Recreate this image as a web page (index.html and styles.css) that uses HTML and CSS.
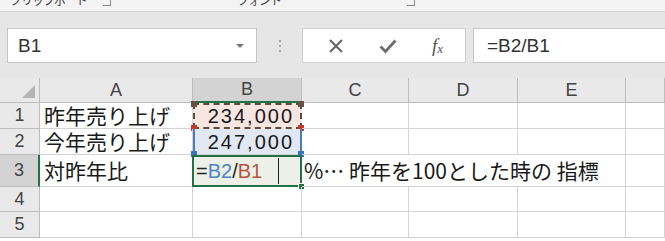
FILE: index.html
```html
<!DOCTYPE html>
<html lang="ja">
<head>
  <meta charset="UTF-8">
  <meta name="viewport" content="width=device-width, initial-scale=1.0">
  <title>対昨年比</title>
  <link rel="stylesheet" href="styles.css">
</head>
<body>
  <div class="ribbon">
    <div class="ribbon-group group-clip">
      <span class="ribbon-label">クリップボード</span>
      <span class="launcher"></span>
    </div>
    <div class="ribbon-group group-font">
      <span class="ribbon-label">フォント</span>
      <span class="launcher"></span>
    </div>
  </div>

  <div class="formula-bar">
    <div class="name-box">
      <span class="name-text">B1</span>
      <span class="name-arrow"></span>
    </div>
    <div class="bar-sep"><span></span><span></span><span></span></div>
    <div class="bar-buttons">
      <svg class="btn-icon" width="16" height="16" viewBox="0 0 16 16">
        <path d="M2 2 L14 14 M14 2 L2 14" stroke="#6b6b6b" stroke-width="2.2" fill="none"/>
      </svg>
      <svg class="btn-icon" width="18" height="16" viewBox="0 0 18 16">
        <path d="M1.5 8.5 L6.5 13.5 L16.5 2.5" stroke="#6b6b6b" stroke-width="2.8" fill="none"/>
      </svg>
      <span class="fx">f<sub>x</sub></span>
    </div>
    <div class="formula-input">=B2/B1</div>
  </div>

  <div class="sheet">
    <div class="hd corner"><span class="corner-tri"></span></div>
    <div class="hd">A</div>
    <div class="hd hd-active-col">B</div>
    <div class="hd">C</div>
    <div class="hd">D</div>
    <div class="hd">E</div>
    <div class="hd"></div>

    <div class="rh">1</div>
    <div class="cell">昨年売り上げ</div>
    <div class="cell num ref-b1">234,000
      <span class="sq sq-tl"></span><span class="sq sq-tr"></span>
      <span class="sq sq-bl"></span><span class="sq sq-br"></span>
    </div>
    <div class="cell"></div>
    <div class="cell"></div>
    <div class="cell"></div>
    <div class="cell"></div>

    <div class="rh">2</div>
    <div class="cell">今年売り上げ</div>
    <div class="cell num ref-b2">247,000
      <span class="sq sq-bl"></span><span class="sq sq-br"></span>
    </div>
    <div class="cell"></div>
    <div class="cell"></div>
    <div class="cell"></div>
    <div class="cell"></div>

    <div class="rh rh-active">3</div>
    <div class="cell">対昨年比</div>
    <div class="cell editing"><span class="op">=</span><span class="r-b2">B2</span><span class="op">/</span><span class="r-b1">B1</span><span class="caret"></span><span class="fill-handle"></span></div>
    <div class="cell note">%… 昨年を100とした時の 指標</div>
    <div class="cell"></div>

    <div class="rh">4</div>
    <div class="cell"></div>
    <div class="cell"></div>
    <div class="cell"></div>
    <div class="cell"></div>
    <div class="cell"></div>
    <div class="cell"></div>

    <div class="rh">5</div>
    <div class="cell"></div>
    <div class="cell"></div>
    <div class="cell"></div>
    <div class="cell"></div>
    <div class="cell"></div>
    <div class="cell"></div>
  </div>
</body>
</html>
```

FILE: styles.css
```css
*{
  margin: 0;
  padding: 0;
  box-sizing: border-box;
}
body{
  width: 665px;
  height: 241px;
  overflow: hidden;
  background: #fff;
  font-family: "Liberation Sans", "Noto Sans CJK JP", sans-serif;
  color: #222;
}

/* ribbon (cut off at the top) */
.ribbon{
  height: 12px;
  overflow: hidden;
  display: flex;
  background: #f3f3f3;
  border-bottom: 1px solid #d5d5d5;
}
.ribbon-group{
  display: flex;
  align-items: flex-start;
  margin-top: -8px;
}
.group-clip{
  width: 237px;
  padding-left: 10px;
}
.group-clip .launcher{
  margin-left: 16px;
}
.group-font{
  width: 428px;
}
.group-font .launcher{
  margin-left: 126px;
}
.ribbon-label{
  font: 12px "Noto Sans CJK JP", sans-serif;
  line-height: 16px;
  color: #3c3c3c;
  letter-spacing: -1px;
}
.launcher{
  width: 8px;
  height: 8px;
  margin-top: 6px;
  border-right: 1px solid #8a8a8a;
  border-bottom: 1px solid #8a8a8a;
}

/* formula bar */
.formula-bar{
  height: 66px;
  display: flex;
  align-items: flex-start;
  padding-top: 16px;
  background: #e6e6e6;
}
.name-box{
  width: 250px;
  height: 35px;
  margin-left: 7px;
  display: flex;
  align-items: center;
  justify-content: space-between;
  padding: 0 12px 0 10px;
  background: #fff;
  border: 1px solid #c6c6c6;
}
.name-text{
  font-size: 19px;
  color: #333;
}
.name-arrow{
  width: 0;
  height: 0;
  border-left: 4px solid transparent;
  border-right: 4px solid transparent;
  border-top: 4px solid #7a7a7a;
  margin-top: 1px;
}
.bar-sep{
  width: 45px;
  height: 35px;
  display: flex;
  flex-direction: column;
  align-items: center;
  justify-content: center;
  gap: 3px;
}
.bar-sep span{
  width: 2px;
  height: 2px;
  background: #a8a8a8;
}
.bar-buttons{
  width: 164px;
  height: 35px;
  display: flex;
  align-items: center;
  justify-content: space-between;
  padding: 0 22px 0 25px;
  background: #fff;
  border: 1px solid #d2d2d2;
}
.fx{
  font: italic 19px "Liberation Serif", serif;
  color: #555;
}
.fx sub{
  font: italic 13px "Liberation Serif", serif;
  vertical-align: -1px;
}
.formula-input{
  flex: 1;
  height: 35px;
  margin-left: 7px;
  margin-right: -2px;
  padding-left: 13px;
  line-height: 33px;
  font-size: 19px;
  color: #333;
  background: #fff;
  border: 1px solid #c6c6c6;
}

/* sheet grid */
.sheet{
  display: grid;
  grid-template-columns: 40px 153px 109px 107px 109px 108px 39px;
  grid-template-rows: 25px 26px 26px 32px 25px 26px;
  background: #fff;
}
.hd, .rh{
  display: flex;
  align-items: center;
  justify-content: center;
  background: #e9e9e9;
  color: #444;
  font-size: 18px;
  border-right: 1px solid #bdbdbd;
  border-bottom: 1px solid #bdbdbd;
}
.hd-active-col{
  background: #d3d3d3;
  border-bottom: 2px solid #217346;
}
.rh-active{
  background: #d3d3d3;
  border-right: 2px solid #217346;
}
.corner{
  position: relative;
}
.corner-tri{
  position: absolute;
  right: 4px;
  bottom: 4px;
  width: 0;
  height: 0;
  border-left: 13px solid transparent;
  border-bottom: 13px solid #b5b5b5;
}
.cell{
  position: relative;
  display: flex;
  align-items: center;
  padding-left: 4px;
  font: 21px "Noto Sans CJK JP", sans-serif;
  line-height: 1;
  color: #1a1a1a;
  white-space: nowrap;
  border-right: 1px solid #d4d4d4;
  border-bottom: 1px solid #d4d4d4;
}
.num{
  justify-content: flex-end;
  padding-right: 6px;
  font: 20px "Liberation Sans", sans-serif;
  line-height: 1;
  letter-spacing: 2px;
}

/* range references while editing */
.ref-b1{
  background: #f7e5e2;
  border: 2px dashed #5b4a3e;
}
.ref-b2{
  background: #e1e8f4;
  border-left: 2px solid #4a7ebb;
  border-right: 2px solid #4a7ebb;
}
.sq{
  position: absolute;
  width: 6px;
  height: 6px;
}
.ref-b1 .sq-tl, .ref-b1 .sq-tr{ background: #6a5043; top: -4px; }
.ref-b1 .sq-bl, .ref-b1 .sq-br{ background: #c0392b; bottom: -4px; }
.ref-b2 .sq{ background: #3b73c4; bottom: -3px; }
.sq-tl, .sq-bl{ left: -4px; }
.sq-tr, .sq-br{ right: -4px; }

.editing{
  background: #edf0e6;
  border: 2px solid #217346;
  margin-left: -1px;
  padding-left: 2px;
  font: 20px "Liberation Sans", sans-serif;
  line-height: 1;
}
.op{ color: #222; }
.r-b2{ color: #4a86c8; }
.r-b1{ color: #b4553f; }
.caret{
  width: 1px;
  height: 26px;
  margin-left: 16px;
  background: #222;
}
.fill-handle{
  position: absolute;
  right: -5px;
  bottom: -5px;
  width: 7px;
  height: 7px;
  background: #217346;
  border: 1px solid #fff;
}
.note{
  grid-column: span 3;
  padding-left: 2px;
}
```
